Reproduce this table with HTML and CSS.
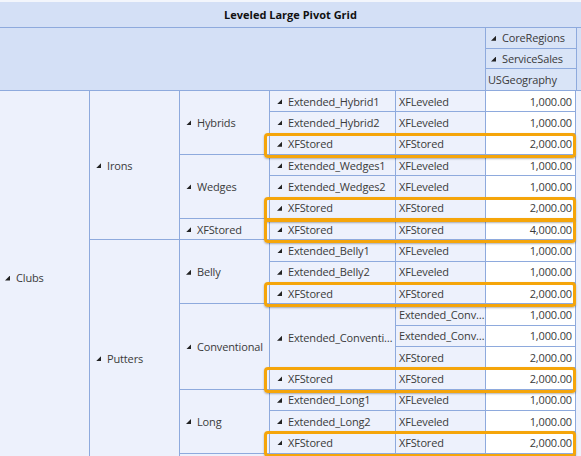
FILE: index.html
```html
<!DOCTYPE html>
<html>
<head>
<meta charset="utf-8">
<link rel="stylesheet" href="styles.css">
</head>
<body>
<div class="pivot">
  <div class="title">Leveled Large Pivot Grid</div>
  <div class="header">
    <div class="header-space"></div>
    <div class="colheads">
      <div class="colhead"><span class="tri"></span>CoreRegions</div>
      <div class="colhead"><span class="tri"></span>ServiceSales</div>
      <div class="colhead plain">USGeography</div>
    </div>
    <div class="header-rest"></div>
  </div>
  <div class="grid">
    <div class="cell c1 clubs"><span class="tri"></span>Clubs</div>
    <div class="cell c2 irons"><span class="tri"></span>Irons</div>
    <div class="cell c2 putters"><span class="tri"></span>Putters</div>

    <div class="cell c3 r-hybrids"><span class="tri"></span>Hybrids</div>
    <div class="cell c3 r-wedges"><span class="tri"></span>Wedges</div>
    <div class="cell c3 r-xf"><span class="tri"></span>XFStored</div>
    <div class="cell c3 r-belly"><span class="tri"></span>Belly</div>
    <div class="cell c3 r-conv"><span class="tri"></span>Conventional</div>
    <div class="cell c3 r-long"><span class="tri"></span>Long</div>
    <div class="cell c3 r-next"></div>

    <div class="cell c4 row1"><span class="tri"></span>Extended_Hybrid1</div>
    <div class="cell c5 row1">XFLeveled</div>
    <div class="cell val row1">1,000.00</div>

    <div class="cell c4 row2"><span class="tri"></span>Extended_Hybrid2</div>
    <div class="cell c5 row2">XFLeveled</div>
    <div class="cell val row2">1,000.00</div>

    <div class="cell c4 row3"><span class="tri"></span>XFStored</div>
    <div class="cell c5 row3">XFStored</div>
    <div class="cell val row3">2,000.00</div>

    <div class="cell c4 row4"><span class="tri"></span>Extended_Wedges1</div>
    <div class="cell c5 row4">XFLeveled</div>
    <div class="cell val row4">1,000.00</div>

    <div class="cell c4 row5"><span class="tri"></span>Extended_Wedges2</div>
    <div class="cell c5 row5">XFLeveled</div>
    <div class="cell val row5">1,000.00</div>

    <div class="cell c4 row6"><span class="tri"></span>XFStored</div>
    <div class="cell c5 row6">XFStored</div>
    <div class="cell val row6">2,000.00</div>

    <div class="cell c4 row7"><span class="tri"></span>XFStored</div>
    <div class="cell c5 row7">XFStored</div>
    <div class="cell val row7">4,000.00</div>

    <div class="cell c4 row8"><span class="tri"></span>Extended_Belly1</div>
    <div class="cell c5 row8">XFLeveled</div>
    <div class="cell val row8">1,000.00</div>

    <div class="cell c4 row9"><span class="tri"></span>Extended_Belly2</div>
    <div class="cell c5 row9">XFLeveled</div>
    <div class="cell val row9">1,000.00</div>

    <div class="cell c4 row10"><span class="tri"></span>XFStored</div>
    <div class="cell c5 row10">XFStored</div>
    <div class="cell val row10">2,000.00</div>

    <div class="cell c4 conv-span"><span class="tri"></span><span class="clip">Extended_Conventional</span></div>
    <div class="cell c5 row11"><span class="clip">Extended_Conventional1</span></div>
    <div class="cell val row11">1,000.00</div>
    <div class="cell c5 row12"><span class="clip">Extended_Conventional2</span></div>
    <div class="cell val row12">1,000.00</div>
    <div class="cell c5 row13">XFStored</div>
    <div class="cell val row13">2,000.00</div>

    <div class="cell c4 row14"><span class="tri"></span>XFStored</div>
    <div class="cell c5 row14">XFStored</div>
    <div class="cell val row14">2,000.00</div>

    <div class="cell c4 row15"><span class="tri"></span>Extended_Long1</div>
    <div class="cell c5 row15">XFLeveled</div>
    <div class="cell val row15">1,000.00</div>

    <div class="cell c4 row16"><span class="tri"></span>Extended_Long2</div>
    <div class="cell c5 row16">XFLeveled</div>
    <div class="cell val row16">1,000.00</div>

    <div class="cell c4 row17"><span class="tri"></span>XFStored</div>
    <div class="cell c5 row17">XFStored</div>
    <div class="cell val row17">2,000.00</div>

    <div class="cell c4 row18"></div>
    <div class="cell c5 row18"></div>
    <div class="cell val row18"></div>

    <div class="hl row3"></div>
    <div class="hl row6"></div>
    <div class="hl row7"></div>
    <div class="hl row10"></div>
    <div class="hl row14"></div>
    <div class="hl row17"></div>
  </div>
</div>
</body>
</html>
```

FILE: styles.css
```css
* { box-sizing: border-box; }
html, body {
  margin: 0;
  padding: 0;
  width: 581px;
  height: 456px;
  overflow: hidden;
  background: #f3f6fc;
}
.pivot {
  font-family: "Open Sans", "Noto Sans", sans-serif;
  font-size: 11px;
  letter-spacing: -0.15px;
  color: #3a3a3a;
  padding-top: 2px;
}
.title {
  height: 26px;
  background: #d4e0f6;
  border-bottom: 1px solid #8eaadd;
  font-weight: bold;
  color: #111;
  letter-spacing: 0;
  display: flex;
  align-items: center;
  justify-content: center;
  padding-bottom: 1px;
}
.header {
  display: flex;
  height: 63px;
  background: #d4e0f6;
  border-bottom: 1px solid #8eaadd;
}
.header-space { width: 485px; }
.colheads {
  width: 92px;
  display: flex;
  flex-direction: column;
}
.colhead {
  height: 21px;
  border-left: 1px solid #8eaadd;
  border-right: 1px solid #8eaadd;
  border-bottom: 1px solid #8eaadd;
  background: #d9e4f7;
  display: flex;
  align-items: center;
  padding-left: 5px;
  white-space: nowrap;
}
.colhead.plain { padding-left: 2px; border-bottom: none; }
.header-rest { flex: 1; }

.tri {
  display: inline-block;
  width: 5px;
  height: 5px;
  margin-right: 6px;
  margin-top: 1px;
  flex: none;
  background: #222;
  clip-path: polygon(100% 0, 100% 100%, 0 100%);
}

.grid {
  display: grid;
  grid-template-columns: 90px 90px 90px 126px 90px 90px 1fr;
  grid-auto-rows: calc(64px / 3);
  background: #eef2fc;
  position: relative;
}
.cell {
  background: #edf1fc;
  border-right: 1px solid #8eaadd;
  border-bottom: 1px solid #8eaadd;
  display: flex;
  align-items: center;
  padding-left: 6px;
  white-space: nowrap;
  overflow: hidden;
}
.c1 { grid-column: 1; }
.c2 { grid-column: 2; }
.c3 { grid-column: 3; }
.c4 { grid-column: 4; padding-left: 7px; }
.c5 { grid-column: 5; padding-left: 3px; }
.val {
  grid-column: 6;
  background: #ffffff;
  justify-content: flex-end;
  padding-left: 0;
  padding-right: 3px;
}
.clip {
  overflow: hidden;
  text-overflow: ellipsis;
  white-space: nowrap;
  min-width: 0;
}

.clubs { grid-row: 1 / 20; padding-left: 5px; padding-bottom: 32px; border-bottom: none; }
.irons { grid-row: 1 / 8; }
.putters { grid-row: 8 / 20; padding-bottom: 20px; border-bottom: none; }
.r-hybrids { grid-row: 1 / 4; }
.r-wedges { grid-row: 4 / 7; }
.r-xf { grid-row: 7; }
.r-belly { grid-row: 8 / 11; }
.r-conv { grid-row: 11 / 15; }
.r-long { grid-row: 15 / 18; }
.r-next { grid-row: 18 / 20; }
.conv-span { grid-row: 11 / 14; padding-top: 4px; }

.row1 { grid-row: 1; }
.row2 { grid-row: 2; }
.row3 { grid-row: 3; }
.row4 { grid-row: 4; }
.row5 { grid-row: 5; }
.row6 { grid-row: 6; }
.row7 { grid-row: 7; }
.row8 { grid-row: 8; }
.row9 { grid-row: 9; }
.row10 { grid-row: 10; }
.row11 { grid-row: 11; }
.row12 { grid-row: 12; }
.row13 { grid-row: 13; }
.row14 { grid-row: 14; }
.row15 { grid-row: 15; }
.row16 { grid-row: 16; }
.row17 { grid-row: 17; }
.row18 { grid-row: 18; }

.hl {
  grid-column: 4 / 7;
  margin: -1px 0 -3px -6px;
  border: 3px solid #f5a50a;
  border-radius: 4px;
  box-shadow: 0 1px 2px rgba(0, 0, 0, 0.3);
  position: relative;
  z-index: 2;
  pointer-events: none;
}
```
